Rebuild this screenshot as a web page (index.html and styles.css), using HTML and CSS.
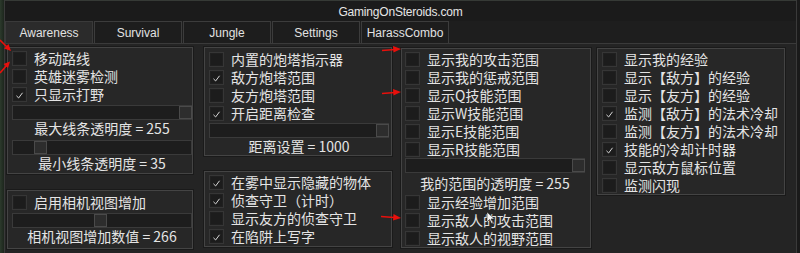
FILE: index.html
```html
<!DOCTYPE html>
<html>
<head>
<meta charset="utf-8">
<link rel="stylesheet" href="styles.css">
</head>
<body>
<div class="window">
  <div class="titlebar">GamingOnSteroids.com</div>
  <div class="tabs">
    <div class="tab active">Awareness</div>
    <div class="tab">Survival</div>
    <div class="tab">Jungle</div>
    <div class="tab">Settings</div>
    <div class="tab">HarassCombo</div>
  </div>
  <div class="content">
    <div class="col">
      <div class="panel w186 p-a">
        <div class="row"><span class="cb"></span><span class="lbl">移动路线</span></div>
        <div class="row"><span class="cb"></span><span class="lbl">英雄迷雾检测</span></div>
        <div class="row"><span class="cb on"><svg viewBox="0 0 15 15"><polyline points="4,9 6.5,11.5 11,5.5"/></svg></span><span class="lbl">只显示打野</span></div>
        <div class="slider s-first"><span class="thumb" style="left:166px"></span></div>
        <div class="val">最大线条透明度 = 255</div>
        <div class="slider s-second"><span class="thumb" style="left:21px"></span></div>
        <div class="val">最小线条透明度 = 35</div>
      </div>
      <div class="panel w186 p-b">
        <div class="row"><span class="cb"></span><span class="lbl">启用相机视图增加</span></div>
        <div class="slider s-first"><span class="thumb" style="left:81px"></span></div>
        <div class="val">相机视图增加数值 = 266</div>
      </div>
    </div>
    <div class="col">
      <div class="panel w188 p-c">
        <div class="row"><span class="cb"></span><span class="lbl">内置的炮塔指示器</span></div>
        <div class="row"><span class="cb on"><svg viewBox="0 0 15 15"><polyline points="4,9 6.5,11.5 11,5.5"/></svg></span><span class="lbl">敌方炮塔范围</span></div>
        <div class="row"><span class="cb"></span><span class="lbl">友方炮塔范围</span></div>
        <div class="row"><span class="cb on"><svg viewBox="0 0 15 15"><polyline points="4,9 6.5,11.5 11,5.5"/></svg></span><span class="lbl">开启距离检查</span></div>
        <div class="slider s-tight"><span class="thumb" style="left:166px"></span></div>
        <div class="val">距离设置 = 1000</div>
      </div>
      <div class="panel w188 p-d">
        <div class="row"><span class="cb on"><svg viewBox="0 0 15 15"><polyline points="4,9 6.5,11.5 11,5.5"/></svg></span><span class="lbl">在雾中显示隐藏的物体</span></div>
        <div class="row"><span class="cb on"><svg viewBox="0 0 15 15"><polyline points="4,9 6.5,11.5 11,5.5"/></svg></span><span class="lbl">侦查守卫（计时）</span></div>
        <div class="row"><span class="cb"></span><span class="lbl">显示友方的侦查守卫</span></div>
        <div class="row"><span class="cb on"><svg viewBox="0 0 15 15"><polyline points="4,9 6.5,11.5 11,5.5"/></svg></span><span class="lbl">在陷阱上写字</span></div>
      </div>
    </div>
    <div class="col col-low">
      <div class="panel w190 p-e">
        <div class="row"><span class="cb"></span><span class="lbl">显示我的攻击范围</span></div>
        <div class="row"><span class="cb"></span><span class="lbl">显示我的惩戒范围</span></div>
        <div class="row"><span class="cb"></span><span class="lbl">显示Q技能范围</span></div>
        <div class="row"><span class="cb"></span><span class="lbl">显示W技能范围</span></div>
        <div class="row"><span class="cb"></span><span class="lbl">显示E技能范围</span></div>
        <div class="row"><span class="cb"></span><span class="lbl">显示R技能范围</span></div>
        <div class="slider s-none"><span class="thumb" style="left:166px"></span></div>
        <div class="val val-tall">我的范围的透明度 = 255</div>
        <div class="row"><span class="cb"></span><span class="lbl">显示经验增加范围</span></div>
        <div class="row"><span class="cb"></span><span class="lbl">显示敌人的攻击范围</span></div>
        <div class="row"><span class="cb"></span><span class="lbl">显示敌人的视野范围</span></div>
      </div>
    </div>
    <div class="col col-low">
      <div class="panel w188 p-f">
        <div class="row"><span class="cb"></span><span class="lbl">显示我的经验</span></div>
        <div class="row"><span class="cb"></span><span class="lbl">显示【敌方】的经验</span></div>
        <div class="row"><span class="cb"></span><span class="lbl">显示【友方】的经验</span></div>
        <div class="row"><span class="cb on"><svg viewBox="0 0 15 15"><polyline points="4,9 6.5,11.5 11,5.5"/></svg></span><span class="lbl">监测【敌方】的法术冷却</span></div>
        <div class="row"><span class="cb"></span><span class="lbl">监测【友方】的法术冷却</span></div>
        <div class="row"><span class="cb on"><svg viewBox="0 0 15 15"><polyline points="4,9 6.5,11.5 11,5.5"/></svg></span><span class="lbl">技能的冷却计时器</span></div>
        <div class="row"><span class="cb"></span><span class="lbl">显示敌方鼠标位置</span></div>
        <div class="row"><span class="cb"></span><span class="lbl">监测闪现</span></div>
      </div>
    </div>
  </div>
</div>
<svg class="overlay" width="800" height="253" viewBox="0 0 800 253">
  <g stroke="#e8100c" stroke-width="1.6" fill="#e8100c">
    <line x1="0" y1="40" x2="8" y2="48"/>
    <polygon points="11,51 4,48.5 8.5,44" stroke="none"/>
    <line x1="0" y1="73" x2="7" y2="65"/>
    <polygon points="10,61.5 8,68 3.5,64" stroke="none"/>
    <line x1="382" y1="50.5" x2="395" y2="49.5"/>
    <polygon points="401,49 393,46 393.5,52.5" stroke="none"/>
    <line x1="382" y1="93.5" x2="395" y2="92.5"/>
    <polygon points="401,92 393,89 393.5,95.5" stroke="none"/>
    <line x1="381" y1="216.5" x2="394" y2="217.5"/>
    <polygon points="401,218 393.5,214 393,220.5" stroke="none"/>
  </g>
  <polygon points="487,212 487,222 489.5,219.5 491.5,223.5 493,222.8 491,219 494.5,219" fill="#f4f4f4" stroke="#222" stroke-width="0.6"/>
</svg>
</body>
</html>
```
FILE: styles.css
```css
* { box-sizing: border-box; }
html, body { margin: 0; padding: 0; }
body {
  width: 800px;
  height: 253px;
  overflow: hidden;
  background: linear-gradient(90deg, #2c3a2c 0, #1d261d 4px, #1a1a1a 4px);
  font-family: "Noto Sans CJK SC", "Liberation Sans", sans-serif;
  color: #e4e4e4;
  position: relative;
}
.window {
  margin-left: 4px;
  width: 793px;
  height: 253px;
  background: #242424;
  border-left: 1px solid #3a3a3a;
  border-right: 1px solid #3a3a3a;
}
.titlebar {
  height: 21px;
  line-height: 22px;
  background: #1b1b1b;
  border-top: 1px solid #363a36;
  text-align: center;
  font-family: "Liberation Sans", Arial, sans-serif;
  font-size: 12px;
  color: #e6e6e6;
  letter-spacing: -0.2px;
}
.tabs {
  display: flex;
  gap: 1px;
  height: 23px;
  background: #1e1e1e;
  border-bottom: 1px solid #3a3a3a;
}
.tab {
  width: 88px;
  height: 22px;
  border: 1px solid #3c3c3c;
  border-bottom: none;
  background: #1d1d1d;
  font-family: "Liberation Sans", Arial, sans-serif;
  font-size: 12px;
  line-height: 22px;
  text-align: center;
  color: #e2e2e2;
}
.tab.active { background: #2b2b2b; border-color: #3a3a3a; }
.content {
  display: grid;
  grid-template-columns: 197px 197px 196px 188px;
  padding: 3px 0 0 2px;
}
.col { display: flex; flex-direction: column; align-items: flex-start; }
.col-low { padding-top: 1px; }
.panel {
  background: #272727;
  border: 1px solid #444444;
  box-shadow: 0 0 0 1px #1a1a1a;
  padding: 1px 0 2px 4px;
}
.w186 { width: 186px; }
.w188 { width: 188px; }
.w190 { width: 190px; padding-left: 3px; }
.p-a { padding-bottom: 2px; }
.p-b { margin-top: 16px; padding-top: 2px; padding-bottom: 4px; }
.p-c { padding-top: 2px; padding-bottom: 1px; }
.p-d { margin-top: 15px; padding-top: 1px; padding-bottom: 1px; }
.p-e { padding-bottom: 0; }
.p-f { padding-bottom: 0; }
.row {
  display: flex;
  align-items: center;
  height: 18px;
  gap: 7px;
}
.cb {
  width: 15px;
  height: 15px;
  flex: none;
  background: #1c1c1c;
  border: 1px solid #363636;
  box-shadow: inset 0 0 0 1px #202020;
  display: flex;
}
.cb svg { width: 13px; height: 13px; }
.cb polyline { fill: none; stroke: #e0e0e0; stroke-width: 1.1; }
.lbl {
  display: block;
  height: 18px;
  font-size: 14px;
  line-height: 18px;
  white-space: nowrap;
}
.slider {
  position: relative;
  width: 180px;
  height: 15px;
  background: #1d1d1d;
  border: 1px solid #3a3a3a;
}
.s-first { margin-top: 2px; }
.s-second { margin-top: 4px; }
.s-tight { margin-top: 1px; }
.s-none { margin-top: 0; }
.thumb {
  position: absolute;
  top: 0;
  width: 13px;
  height: 13px;
  background: #2d2d2d;
  border: 1px solid #4a4a4a;
}
.val {
  width: 180px;
  height: 16px;
  line-height: 16px;
  font-size: 14px;
  text-align: center;
  white-space: nowrap;
}
.val-tall { height: 20px; line-height: 20px; }
.overlay { position: absolute; left: 0; top: 0; pointer-events: none; }
```
